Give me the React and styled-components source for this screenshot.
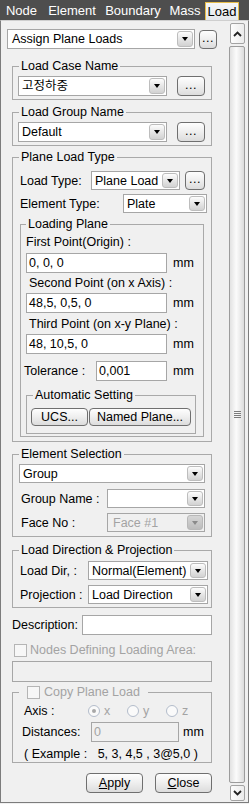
import React from 'react';
import styled, { createGlobalStyle } from 'styled-components';

const GlobalStyle = createGlobalStyle`
  html, body { margin: 0; padding: 0; background: #f0f0f0; }
  body {
    font-family: "Liberation Sans", Arial, "Noto Sans CJK KR", sans-serif;
    font-size: 12.5px;
    line-height: 14px;
    color: #000;
  }
  * { box-sizing: border-box; }
`;

const Window = styled.div`
  width: 249px;
  height: 804px;
  display: flex;
  flex-direction: column;
  background: #f0f0f0;
`;

const TabBar = styled.div`
  height: 20px;
  flex-shrink: 0;
  display: flex;
  background: #4e4e4e;
`;

const Tab = styled.div`
  width: ${p => p.$w}px;
  margin-top: 2px;
  height: 18px;
  line-height: 17px;
  text-align: center;
  white-space: nowrap;
  color: #fff;
  font-size: 13px;
  ${p => p.$active && `
    color: #000;
    background: linear-gradient(#f6f7f8, #e4e8ec);
    border: 1px solid #e6bd4a;
    border-bottom: none;
  `}
`;

const Panel = styled.div`
  flex: 1;
  display: flex;
  min-height: 0;
  border: 1px solid #7c7c7c;
  border-top-color: #cfcfcf;
  margin-bottom: 1px;
`;

const Content = styled.div`
  width: 227px;
  padding: 8px 0 0 6px;
  display: flex;
  flex-direction: column;
`;

const Row = styled.div`
  display: flex;
  align-items: center;
  gap: ${p => p.$gap || 0}px;
  margin-top: ${p => p.$mt || 0}px;
  margin-left: ${p => p.$ml || 0}px;
  ${p => p.$w && `width: ${p.$w}px;`}
  ${p => p.$end && `justify-content: flex-end;`}
`;

const Label = styled.span`
  display: block;
  flex-shrink: 0;
  white-space: nowrap;
  ${p => p.$w && `width: ${p.$w}px;`}
  margin-top: ${p => p.$mt || 0}px;
  margin-left: ${p => p.$ml || 0}px;
  color: ${p => (p.$disabled ? '#a3a3a3' : '#000')};
`;

const Unit = styled.span`
  margin-left: ${p => p.$ml || 6}px;
`;

const ComboBox = styled.div`
  display: flex;
  align-items: stretch;
  flex-shrink: 0;
  width: ${p => p.$w}px;
  height: ${p => p.$h || 20}px;
  border: 1px solid #a6a6a6;
  background: ${p => (p.$disabled ? '#f0f0f0' : '#fff')};
  color: ${p => (p.$disabled ? '#a3a3a3' : '#000')};
`;

const ComboText = styled.span`
  flex: 1;
  min-width: 0;
  overflow: hidden;
  white-space: nowrap;
  padding-left: ${p => p.$pl}px;
  display: flex;
  align-items: center;
`;

const ComboArrow = styled.span`
  width: 16px;
  flex-shrink: 0;
  margin: 1px;
  border: 1px solid ${p => (p.$disabled ? '#b8b8b8' : '#bdbdbd')};
  border-radius: 3px;
  background: ${p =>
    p.$disabled
      ? 'linear-gradient(#d6d6d6, #bcbcbc)'
      : 'linear-gradient(#fdfdfd, #e6e6e6 50%, #d2d2d2)'};
  display: flex;
  align-items: center;
  justify-content: center;

  &::after {
    content: '';
    border-left: 3px solid transparent;
    border-right: 3px solid transparent;
    border-top: 4px solid ${p => (p.$disabled ? '#8a8a8a' : '#000')};
  }
`;

const Combo = ({ w, h, pl = 3, disabled, children }) => (
  <ComboBox $w={w} $h={h} $disabled={disabled}>
    <ComboText $pl={pl}>{children}</ComboText>
    <ComboArrow $disabled={disabled} />
  </ComboBox>
);

const TextBox = styled.div`
  flex-shrink: 0;
  width: ${p => p.$w}px;
  height: ${p => p.$h || 20}px;
  margin-left: ${p => p.$ml || 0}px;
  margin-top: ${p => p.$mt || 0}px;
  border: 1px solid #a6a6a6;
  background: ${p => (p.$disabled ? '#f0f0f0' : '#fff')};
  color: ${p => (p.$disabled ? '#a3a3a3' : '#000')};
  padding-left: 2px;
  display: flex;
  align-items: center;
  white-space: nowrap;
`;

const Button = styled.div`
  flex-shrink: 0;
  width: ${p => p.$w}px;
  height: ${p => p.$h || 20}px;
  margin-left: ${p => p.$ml || 0}px;
  border: 1px solid #6f6f6f;
  border-radius: 4px;
  background: linear-gradient(#fefefe, #f0f0f0 45%, #dcdcdc);
  display: flex;
  align-items: center;
  justify-content: center;
  white-space: nowrap;
  line-height: 14px;
  ${p => p.$dots && `align-items: flex-end; padding-bottom: 3px; letter-spacing: 0.5px;`}
`;

const Group = styled.fieldset`
  margin: ${p => p.$mt || 0}px 0 0 ${p => p.$ml || 0}px;
  width: ${p => p.$w}px;
  min-width: 0;
  padding: 0;
  border: 1px solid #a9a9a9;
`;

const Legend = styled.legend`
  margin-left: ${p => p.$ml || 6}px;
  padding: 0 ${p => p.$pr || 2}px 0 ${p => p.$pl || 2}px;
  line-height: 14px;
  display: flex;
  align-items: center;
  gap: 4px;
  color: ${p => (p.$disabled ? '#a3a3a3' : '#000')};
`;

const Body = styled.div`
  padding: ${p => p.$p};
  display: flex;
  flex-direction: column;
`;

const Check = styled.span`
  flex-shrink: 0;
  width: 13px;
  height: 13px;
  border: 1px solid #b5b5b5;
  background: #f7f7f7;
  margin-left: ${p => p.$ml || 0}px;
`;

const RadioItem = styled.span`
  width: 39px;
  display: flex;
  align-items: center;
  gap: 4px;
  color: #a3a3a3;
`;

const Radio = styled.span`
  width: 12px;
  height: 12px;
  border-radius: 50%;
  border: 1px solid #b3bccb;
  background: #fafafa;
  display: flex;
  align-items: center;
  justify-content: center;

  &::after {
    content: '';
    width: 4px;
    height: 4px;
    border-radius: 50%;
    background: ${p => (p.$on ? '#a8a8a8' : 'transparent')};
  }
`;

const ScrollBar = styled.div`
  width: 19px;
  display: flex;
  flex-direction: column;
  padding: 2px 2px 1px 1px;
  gap: 2px;
`;

const ScrollButton = styled.div`
  height: ${p => p.$h}px;
  flex-shrink: 0;
  margin-left: 1px;
  border: 1px solid #a3a3a3;
  border-radius: 2px;
  background: linear-gradient(to right, #fdfdfd, #ebebeb);
  display: flex;
  align-items: center;
  justify-content: center;
`;

const Thumb = styled.div`
  flex: 1;
  border: 1px solid #9c9c9c;
  border-radius: 2px;
  background: linear-gradient(to right, #e2e2e2, #fbfbfb 45%, #dcdcdc);
  display: flex;
  align-items: center;
  justify-content: center;
`;

const Grip = styled.div`
  width: 7px;
  height: 7px;
  background: repeating-linear-gradient(#7c7c7c 0 1px, transparent 1px 2px);
`;

const Chevron = ({ down }) => (
  <svg width="9" height="6" viewBox="0 0 9 6">
    <polyline
      points={down ? '1,1 4.5,4.5 8,1' : '1,5 4.5,1.5 8,5'}
      fill="none"
      stroke="#222"
      strokeWidth="1.8"
    />
  </svg>
);

export default function App() {
  return (
    <Window>
      <GlobalStyle />
      <TabBar>
        <Tab $w={43}>Node</Tab>
        <Tab $w={58}>Element</Tab>
        <Tab $w={64}>Boundary</Tab>
        <Tab $w={40}>Mass</Tab>
        <Tab $w={34} $active>Load</Tab>
      </TabBar>
      <Panel>
        <Content>
          <Row $gap={4}>
            <Combo w={188} h={20} pl={4}>Assign Plane Loads</Combo>
            <Button $w={18} $h={19} $dots>...</Button>
          </Row>

          <Group $mt={10} $ml={5} $w={200}>
            <Legend>Load Case Name</Legend>
            <Body $p="3px 0 3px 5px">
              <Row $gap={10}>
                <Combo w={149}>고정하중</Combo>
                <Button $w={28} $dots>...</Button>
              </Row>
            </Body>
          </Group>

          <Group $mt={5} $ml={5} $w={200}>
            <Legend>Load Group Name</Legend>
            <Body $p="3px 0 3px 5px">
              <Row $gap={10}>
                <Combo w={149}>Default</Combo>
                <Button $w={28} $dots>...</Button>
              </Row>
            </Body>
          </Group>

          <Group $mt={4} $ml={5} $w={200}>
            <Legend>Plane Load Type</Legend>
            <Body $p="7px 0 4px 7px">
              <Row>
                <Label $w={71}>Load Type:</Label>
                <Combo w={89} h={19}>Plane Load</Combo>
                <Button $w={20} $h={19} $ml={5} $dots>...</Button>
              </Row>
              <Row $mt={4}>
                <Label $w={103}>Element Type:</Label>
                <Combo w={84} h={19}>Plate</Combo>
              </Row>

              <Group $mt={4} $w={184}>
                <Legend $ml={5}>Loading Plane</Legend>
                <Body $p="4px 0 2px 3px">
                  <Label $ml={2}>First Point(Origin) :</Label>
                  <Row $mt={4}>
                    <TextBox $w={141} $ml={2}>0, 0, 0</TextBox>
                    <Unit>mm</Unit>
                  </Row>
                  <Label $mt={3} $ml={5}>Second Point (on x Axis) :</Label>
                  <Row $mt={3}>
                    <TextBox $w={141} $ml={2}>48,5, 0,5, 0</TextBox>
                    <Unit>mm</Unit>
                  </Row>
                  <Label $mt={4} $ml={5}>Third Point (on x-y Plane) :</Label>
                  <Row $mt={3}>
                    <TextBox $w={141} $ml={2}>48, 10,5, 0</TextBox>
                    <Unit>mm</Unit>
                  </Row>
                  <Row $mt={7}>
                    <Label $w={72}>Tolerance :</Label>
                    <TextBox $w={71}>0,001</TextBox>
                    <Unit>mm</Unit>
                  </Row>

                  <Group $mt={7} $ml={2} $w={170}>
                    <Legend $ml={6}>Automatic Setting</Legend>
                    <Body $p="6px 0 7px 4px">
                      <Row $gap={1}>
                        <Button $w={57} $h={18}>UCS...</Button>
                        <Button $w={102} $h={18}>Named Plane...</Button>
                      </Row>
                    </Body>
                  </Group>
                </Body>
              </Group>
            </Body>
          </Group>

          <Group $mt={5} $ml={5} $w={200}>
            <Legend>Element Selection</Legend>
            <Body $p="3px 0 4px 6px">
              <Combo w={186} h={19}>Group</Combo>
              <Row $mt={6}>
                <Label $w={86} $ml={2}>Group Name :</Label>
                <Combo w={98} h={19}></Combo>
              </Row>
              <Row $mt={5}>
                <Label $w={86} $ml={2}>Face No :</Label>
                <Combo w={98} h={19} pl={5} disabled>Face #1</Combo>
              </Row>
            </Body>
          </Group>

          <Group $mt={6} $ml={5} $w={200}>
            <Legend>Load Direction &amp; Projection</Legend>
            <Body $p="4px 0 3px 7px">
              <Row>
                <Label $w={68}>Load Dir, :</Label>
                <Combo w={120} h={19}>Normal(Element)</Combo>
              </Row>
              <Row $mt={5}>
                <Label $w={68}>Projection :</Label>
                <Combo w={120} h={19}>Load Direction</Combo>
              </Row>
            </Body>
          </Group>

          <Row $mt={7} $ml={5}>
            <Label $w={70}>Description:</Label>
            <TextBox $w={130} />
          </Row>

          <Row $mt={8} $gap={3}>
            <Check $ml={7} />
            <Label $disabled>Nodes Defining Loading Area:</Label>
          </Row>

          <TextBox $w={200} $h={21} $ml={5} $mt={4} $disabled />

          <Group $mt={3} $ml={5} $w={200}>
            <Legend $ml={6} $pl={8} $pr={8} $disabled>
              <Check />
              Copy Plane Load
            </Legend>
            <Body $p="5px 0 1px 9px">
              <Row $ml={2}>
                <Label $w={64}>Axis :</Label>
                <RadioItem><Radio $on />x</RadioItem>
                <RadioItem><Radio />y</RadioItem>
                <RadioItem><Radio />z</RadioItem>
              </Row>
              <Row $mt={4}>
                <Label $w={69}>Distances:</Label>
                <TextBox $w={88} $disabled>0</TextBox>
                <Unit $ml={4}>mm</Unit>
              </Row>
              <Label $mt={5} $ml={2}>( Example :&nbsp;&nbsp; 5, 3, 4,5 , 3@5,0 )</Label>
            </Body>
          </Group>

          <Row $mt={10} $w={205} $end $gap={12}>
            <Button $w={57}><span><u>A</u>pply</span></Button>
            <Button $w={57}><span><u>C</u>lose</span></Button>
          </Row>
        </Content>

        <ScrollBar>
          <ScrollButton $h={21}><Chevron /></ScrollButton>
          <Thumb><Grip /></Thumb>
          <ScrollButton $h={16}><Chevron down /></ScrollButton>
        </ScrollBar>
      </Panel>
    </Window>
  );
}
